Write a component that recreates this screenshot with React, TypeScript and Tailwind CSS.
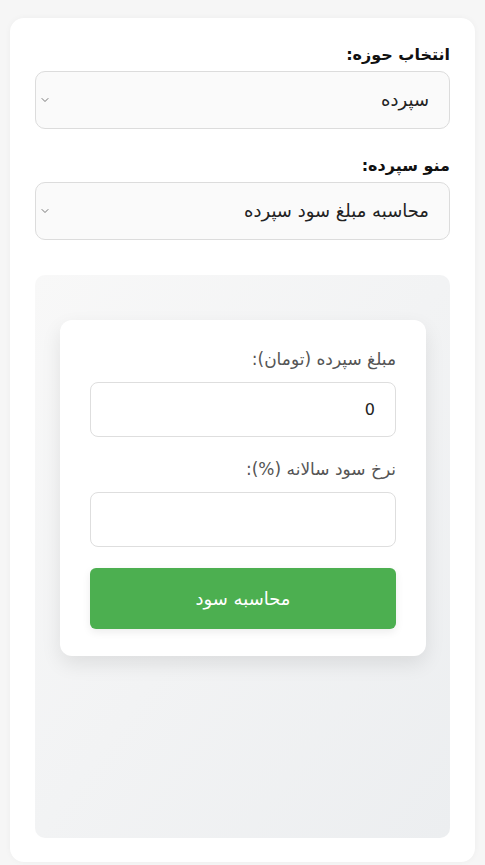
import { ChevronDown } from "lucide-react";

const font = { fontFamily: "'DejaVu Sans', 'Noto Sans', sans-serif" };

function SelectBox({ value }: { value: string }) {
  return (
    <div className="flex h-[58px] items-center justify-between rounded-[10px] border border-[#dcdcdc] bg-[#fafafa] pl-[3px] pr-[20px]">
      <span className="text-[18px] leading-none text-[#222]">{value}</span>
      <ChevronDown className="h-[12px] w-[12px] text-[#555]" strokeWidth={1.6} />
    </div>
  );
}

function Field({ label, value }: { label: string; value?: string }) {
  return (
    <div>
      <label className="mb-[12px] block text-[17px] leading-[22px] text-[#555]">{label}</label>
      <div className="flex h-[55px] items-center rounded-[8px] border border-[#dedede] bg-white px-[20px] text-[16px] text-[#222]">
        {value}
      </div>
    </div>
  );
}

export default function App() {
  return (
    <div dir="rtl" style={font} className="min-h-screen bg-[#f6f6f6] px-[10px] pt-[18px]">
      <div className="rounded-[14px] bg-white px-[25px] pt-[26px] pb-[24px] shadow-[0_0_6px_rgba(0,0,0,0.04)]">
        <label className="mb-[5px] block text-[16px] leading-[22px] font-bold text-[#111]">انتخاب حوزه:</label>
        <SelectBox value="سپرده" />

        <label className="mt-[26px] mb-[5px] block text-[16px] leading-[22px] font-bold text-[#111]">منو سپرده:</label>
        <SelectBox value="محاسبه مبلغ سود سپرده" />

        <div className="mt-[35px] h-[563px] rounded-[10px] bg-gradient-to-br from-[#f8f8f8] to-[#eceef0] pt-[45px] pr-[24px] pl-[25px]">
          <div className="rounded-[12px] bg-white px-[30px] pt-[28px] pb-[27px] shadow-[0_8px_20px_rgba(0,0,0,0.09)]">
            <Field label="مبلغ سپرده (تومان):" value="0" />
            <div className="mt-[21px]">
              <Field label="نرخ سود سالانه (%):" />
            </div>
            <button className="mt-[21px] flex h-[61px] w-full items-center justify-center rounded-[6px] bg-[#4caf50] text-[18px] text-white shadow-[0_3px_8px_rgba(0,0,0,0.08)]">
              محاسبه سود
            </button>
          </div>
        </div>
      </div>
    </div>
  );
}
